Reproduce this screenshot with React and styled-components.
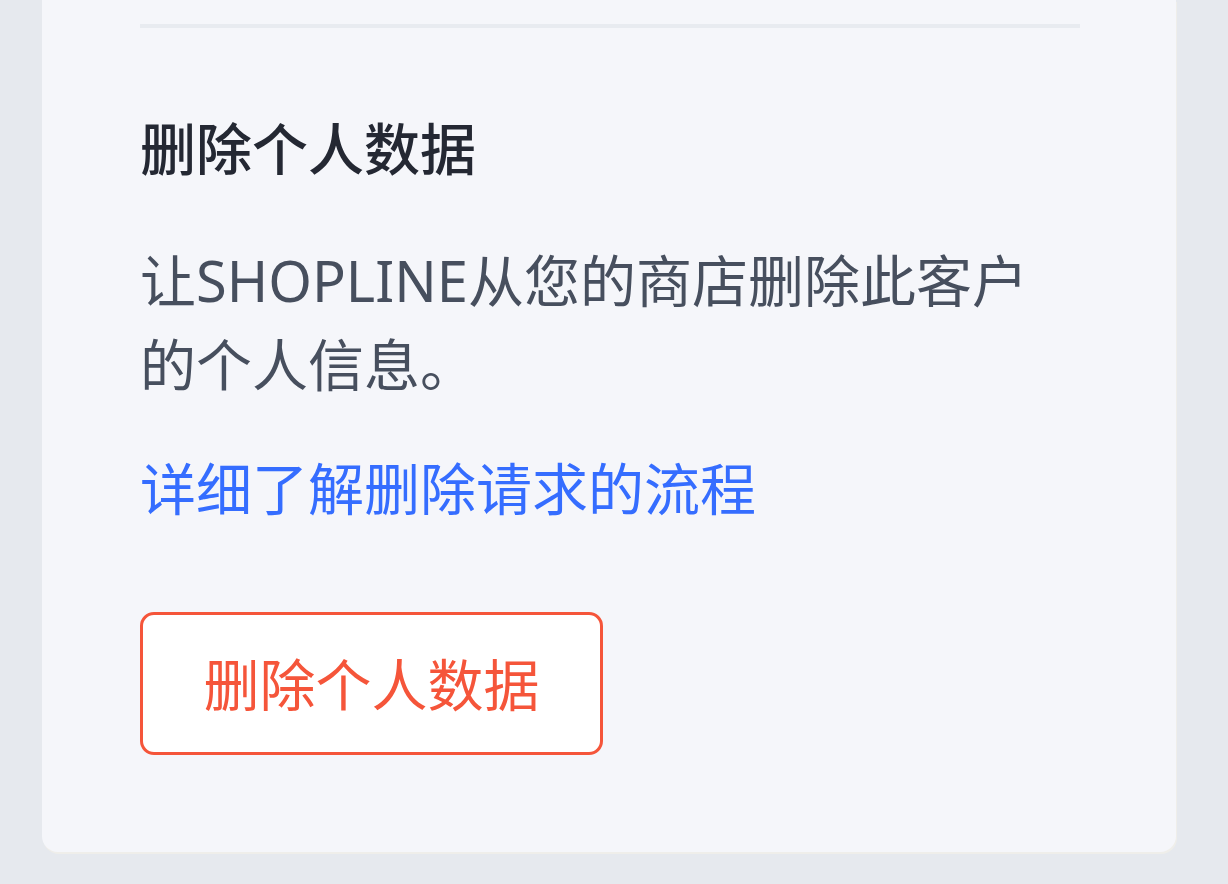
import React from 'react';
import styled, { createGlobalStyle } from 'styled-components';

const GlobalStyle = createGlobalStyle`
  html, body {
    margin: 0;
    padding: 0;
    background: #e6e9ee;
  }
  body {
    font-family: "Noto Sans", "Noto Sans CJK SC", sans-serif;
    -webkit-font-smoothing: antialiased;
  }
`;

const Page = styled.div`
  width: 1228px;
  height: 884px;
  overflow: hidden;
  box-sizing: border-box;
  padding: 0 52px 0 42px;
`;

const Card = styled.section`
  background: #f5f6fa;
  border-radius: 0 0 16px 16px;
  box-shadow: 1px 2px 0 #efeeea;
  padding: 24px 96px 97px 98px;
`;

const Divider = styled.hr`
  margin: 0;
  border: 0;
  height: 4px;
  background: #e8ebf0;
`;

const Title = styled.h3`
  margin: 78px 0 0;
  font-size: 56px;
  line-height: 84px;
  font-weight: 500;
  color: #242833;
`;

const Text = styled.p`
  margin: 48px 0 0;
  max-width: 920px;
  font-size: 56px;
  line-height: 84px;
  font-weight: 400;
  color: #474f5e;
`;

const Link = styled.a`
  display: block;
  margin-top: 40px;
  font-size: 56px;
  line-height: 84px;
  color: #356dff;
  text-decoration: none;
`;

const DangerButton = styled.button`
  display: block;
  margin-top: 82px;
  box-sizing: border-box;
  width: 463px;
  height: 143px;
  padding: 0 60px;
  border: 3px solid #f5553a;
  border-radius: 14px;
  background: #ffffff;
  color: #f5553a;
  font-family: inherit;
  font-size: 56px;
  line-height: 84px;
  cursor: pointer;
`;

export default function App() {
  return (
    <>
      <GlobalStyle />
      <Page>
        <Card>
          <Divider />
          <Title>删除个人数据</Title>
          <Text>让SHOPLINE从您的商店删除此客户的个人信息。</Text>
          <Link href="#">详细了解删除请求的流程</Link>
          <DangerButton type="button">删除个人数据</DangerButton>
        </Card>
      </Page>
    </>
  );
}
